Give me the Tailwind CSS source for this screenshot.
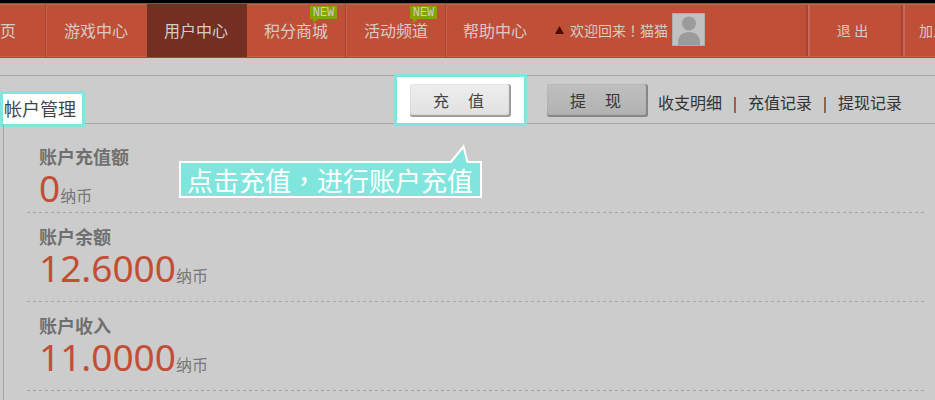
<!DOCTYPE html>
<html lang="zh-CN">
<head>
<meta charset="utf-8">
<meta name="viewport" content="width=device-width, initial-scale=1">
<title>帐户管理</title>
<script src="https://cdn.jsdelivr.net/npm/@tailwindcss/browser@4"></script>
</head>
<body class="min-h-screen flex flex-col overflow-hidden bg-[#cccccc] font-['Noto_Sans','Noto_Sans_CJK_SC',sans-serif] text-[#333333]">
<header class="border-t-3 border-black">
  <nav class="flex h-[55px] overflow-hidden whitespace-nowrap border-y border-[#ab4531] bg-[#c04f37] text-base text-[#d6cbc7] shadow-[inset_0_1px_0_#c8604b,inset_0_-1px_0_#c8604b]">
    <a href="#" class="flex w-[46px] shrink-0 items-center border-r border-[#a84431] pt-px">页</a>
    <a href="#" class="flex w-[101px] shrink-0 items-center justify-center border-l border-[#c8604b] pr-[2px] pt-px">游戏中心</a>
    <a href="#" class="-my-px flex w-[100px] shrink-0 items-center justify-center bg-[#742e22] pr-[2px] pt-px">用户中心</a>
    <a href="#" class="relative flex w-[99px] shrink-0 items-center justify-center border-r border-[#a84431] pt-px">积分商城
      <span class="absolute right-2 top-[2px] flex h-[13px] w-[27px] items-center justify-center bg-[#82a500] font-['Liberation_Mono',monospace] text-xs">NEW
        <svg class="absolute left-[3px] top-[13px]" width="5" height="4" viewBox="0 0 5 4" aria-hidden="true"><path d="M0 0H5L0 4Z" fill="#82a500"/></svg></span></a>
    <a href="#" class="relative flex w-[100px] shrink-0 items-center justify-center border-x border-l-[#c8604b] border-r-[#a84431] pt-px">活动频道
      <span class="absolute right-2 top-[2px] flex h-[13px] w-[27px] items-center justify-center bg-[#82a500] font-['Liberation_Mono',monospace] text-xs">NEW
        <svg class="absolute left-[3px] top-[13px]" width="5" height="4" viewBox="0 0 5 4" aria-hidden="true"><path d="M0 0H5L0 4Z" fill="#82a500"/></svg></span></a>
    <a href="#" class="flex w-[99px] shrink-0 items-center justify-center border-l border-[#c8604b] pr-[2px] pt-px">帮助中心</a>
    <div class="flex flex-1 items-center pb-[2px] pl-[10px] text-sm">
      <svg width="9" height="8" viewBox="0 0 9 8" aria-hidden="true"><path d="M4.500 0L9 8H0Z" fill="#4e0d02"/></svg>
      <span class="ml-[6px] pt-px">欢迎回来<span lang="zh-TW" class="font-['Noto_Sans_CJK_TC',sans-serif]">！</span>猫猫</span>
      <svg class="ml-1" width="33" height="33" viewBox="0 0 33 33" role="img" aria-label="头像"><path d="M0 0H33V33H0Z" fill="#adadad"/><path d="M1 1H32V32H1Z" fill="#c1c1c1"/><circle cx="17" cy="10.500" r="7" fill="#9b9b9b"/><path d="M6 32V29C6 22.500 11 19 17 19S28 22.500 28 29V32Z" fill="#9b9b9b"/></svg>
    </div>
    <a href="#" class="my-px flex w-[95px] shrink-0 items-center justify-center border-x-2 border-l-[#c9695a] border-r-[#a84431] pr-[6px] pt-px text-sm shadow-[-2px_0_0_#a84431]">退 出</a>
    <a href="#" class="my-px flex w-8 shrink-0 items-center overflow-hidden border-l-2 border-[#c9695a] pl-[14px] pt-px text-sm">加入</a>
  </nav>
</header>

<main class="mt-[17px] flex flex-1 flex-col">
  <div class="flex h-[49px] items-start border-y border-[#a5a5a5]">
    <h1 class="mt-[15px] h-9 shrink-0 border-3 border-[#80e6dd] bg-white pl-px pr-[6px] text-lg leading-[30px] text-[#444444]">帐户管理</h1>
    <div class="ml-auto mr-[33px] flex items-start whitespace-nowrap">
      <div class="relative -mt-[2px] h-[52px] w-[133px] border-3 border-[#80e6dd] bg-white px-[13px] py-[7px]">
        <button type="button" class="h-[33px] w-[101px] rounded-[3px] bg-linear-to-b from-[#eeeeee] to-[#e0e0e0] pr-1 pt-px text-base text-[#444444] shadow-[inset_-1px_-1px_1px_1px_#9b9b9b]">充<span class="inline-block w-[19px]"></span>值</button>
        <div class="absolute right-[42px] top-[84px] h-[37px] w-[303px] whitespace-nowrap border-2 border-white bg-[#80e6dd] pl-[6px] text-[26px] leading-[33px] text-white">点击充值<span lang="zh-TW" class="font-['Noto_Sans_CJK_TC',sans-serif]">，</span>进行账户充值
          <svg class="absolute -top-[19px] right-[9px]" width="22" height="19" viewBox="0 0 22 19" aria-hidden="true"><path d="M2 19L14.500 3L18.500 19Z" fill="#80e6dd"/><path d="M1.500 18.500L14.500 2.500L18.500 18.500" fill="none" stroke="#ffffff" stroke-width="2"/></svg>
        </div>
      </div>
      <button type="button" class="ml-5 mt-2 h-[33px] w-[101px] rounded-[3px] bg-linear-to-b from-[#bfbfbf] to-[#b1b1b1] pr-1 pt-px text-base text-[#383838] shadow-[inset_-1px_-1px_1px_1px_#858585]">提<span class="inline-block w-[19px]"></span>现</button>
      <div class="ml-[10px] mt-[15px] flex items-center text-base">
        <a href="#">收支明细</a><span class="w-[26px] text-center">|</span><a href="#">充值记录</a><span class="w-[26px] text-center">|</span><a href="#">提现记录</a>
      </div>
    </div>
  </div>

  <div class="ml-[3px] flex-1 border-l border-[#a5a5a5] pl-[23px] pr-[10px]">
    <section class="bg-[repeating-linear-gradient(90deg,#a5a5a5_0_3px,transparent_3px_6px)] bg-[length:100%_1px] bg-bottom bg-no-repeat pb-[6px] pl-3 pt-[21px]">
      <h2 class="text-lg font-bold leading-6 text-[#707070]">账户充值额</h2>
      <p class="flex h-[38px] items-baseline text-[37px] leading-[38px] text-[#c34e35]">0<span class="text-base text-[#777777]">纳币</span></p>
    </section>
    <section class="bg-[repeating-linear-gradient(90deg,#a5a5a5_0_3px,transparent_3px_6px)] bg-[length:100%_1px] bg-bottom bg-no-repeat pb-[15px] pl-3 pt-3">
      <h2 class="text-lg font-bold leading-6 text-[#707070]">账户余额</h2>
      <p class="flex h-[38px] items-baseline text-[37px] leading-[38px] text-[#c34e35]">12.6000<span class="text-base text-[#777777]">纳币</span></p>
    </section>
    <section class="bg-[repeating-linear-gradient(90deg,#a5a5a5_0_3px,transparent_3px_6px)] bg-[length:100%_1px] bg-bottom bg-no-repeat pb-[15px] pl-3 pt-3">
      <h2 class="text-lg font-bold leading-6 text-[#707070]">账户收入</h2>
      <p class="flex h-[38px] items-baseline text-[37px] leading-[38px] text-[#c34e35]">11.0000<span class="text-base text-[#777777]">纳币</span></p>
    </section>
  </div>
</main>
</body>
</html>
